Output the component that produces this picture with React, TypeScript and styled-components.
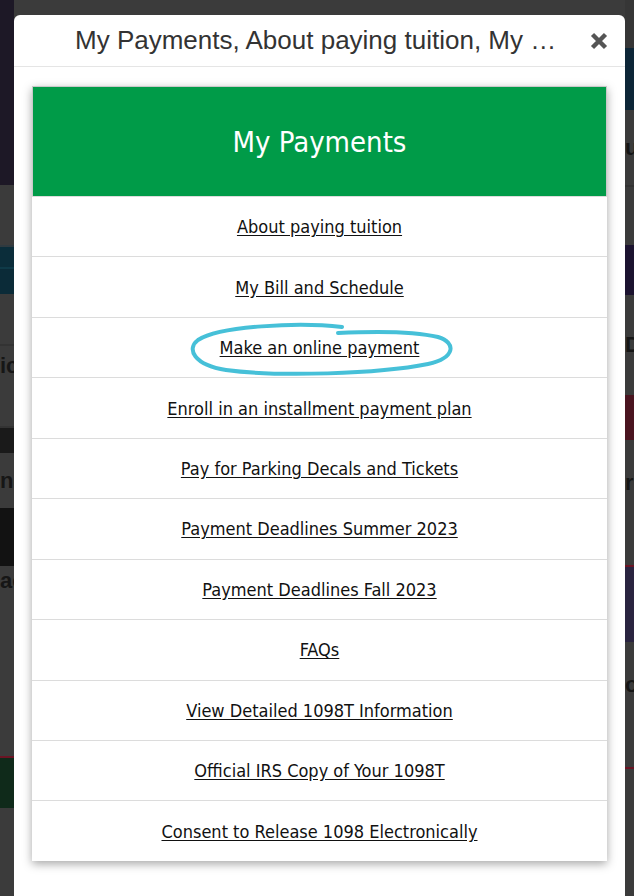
import React from "react";
import styled, { createGlobalStyle } from "styled-components";

const Global = createGlobalStyle`
  html, body { margin: 0; padding: 0; }
  body { background: #3b3b3b; font-family: "Liberation Sans", Arial, sans-serif; }
`;

const Page = styled.div`
  position: relative;
  width: 634px;
  height: 896px;
  overflow: hidden;
  background: #3b3b3b;
  display: flex;
  justify-content: space-between;
`;

const Strip = styled.div<{ $w: number }>`
  width: ${(p) => p.$w}px;
  display: flex;
  flex-direction: column;
`;

const Block = styled.div<{ $h: number; $bg: string; $line?: string }>`
  height: ${(p) => p.$h}px;
  background: ${(p) => p.$bg};
  border-bottom: ${(p) => (p.$line ? `2px solid ${p.$line}` : "none")};
  flex-shrink: 0;
  overflow: hidden;
  font: 700 22px "Liberation Sans", Arial, sans-serif;
  color: #161616;
  display: flex;
  align-items: center;
  white-space: nowrap;
`;

const Modal = styled.div`
  position: absolute;
  top: 15px;
  left: 14px;
  width: 611px;
  height: 920px;
  background: #fff;
  border-radius: 6px;
  display: flex;
  flex-direction: column;
`;

const Header = styled.div`
  height: 52px;
  border-bottom: 1px solid #e5e5e5;
  display: flex;
  align-items: center;
  padding: 0 17px 0 61px;
  gap: 22px;
  box-sizing: border-box;
  flex-shrink: 0;
`;

const Title = styled.h4`
  margin: 0;
  flex: 1;
  min-width: 0;
  font: 400 26px "Liberation Sans", Arial, sans-serif;
  color: #333;
  white-space: nowrap;
  overflow: hidden;
  text-overflow: ellipsis;
`;

const CloseBtn = styled.button`
  border: 0;
  background: none;
  padding: 0;
  width: 18px;
  height: 18px;
  display: flex;
  cursor: pointer;
`;

const Body = styled.div`
  padding: 19px 18px 0 18px;
`;

const Card = styled.div`
  background: #fff;
  box-shadow: 0 3px 9px rgba(0, 0, 0, 0.35);
`;

const Banner = styled.div`
  height: 110px;
  background: #009b48;
  border: 1px solid #c9c9c9;
  border-bottom: 0;
  box-sizing: border-box;
  display: flex;
  align-items: center;
  justify-content: center;
  color: #fff;
  font: 400 29px "DejaVu Sans Condensed", "DejaVu Sans", sans-serif;
  font-stretch: condensed;
`;

const Row = styled.div`
  position: relative;
  height: 60.45px;
  box-sizing: border-box;
  border-top: 1px solid #dcdcdc;
  display: flex;
  align-items: center;
  justify-content: center;
`;

const ItemLink = styled.a`
  font: 400 18px "DejaVu Sans Condensed", "DejaVu Sans", sans-serif;
  font-stretch: condensed;
  color: #111;
  text-decoration: underline;
  text-underline-offset: 2px;
  position: relative;
  z-index: 1;
`;

const Oval = styled.svg`
  position: absolute;
  left: calc(50% - 134px);
  top: 1px;
  pointer-events: none;
`;

const items = [
  "About paying tuition",
  "My Bill and Schedule",
  "Make an online payment",
  "Enroll in an installment payment plan",
  "Pay for Parking Decals and Tickets",
  "Payment Deadlines Summer 2023",
  "Payment Deadlines Fall 2023",
  "FAQs",
  "View Detailed 1098T Information",
  "Official IRS Copy of Your 1098T",
  "Consent to Release 1098 Electronically",
];

const leftBlocks = [
  { h: 185, bg: "#1d1826" },
  { h: 60, bg: "#3b3b3b", line: "#2f3a40" },
  { h: 20, bg: "#0b2d3a", line: "#0f3a48" },
  { h: 25, bg: "#0b2b38" },
  { h: 50, bg: "#3b3b3b", line: "#333" },
  { h: 40, bg: "#3b3b3b", text: "ic" },
  { h: 40, bg: "#3b3b3b", line: "#333" },
  { h: 25, bg: "#1a1a1a" },
  { h: 55, bg: "#3b3b3b", text: "nc" },
  { h: 58, bg: "#121212" },
  { h: 30, bg: "#3b3b3b", text: "ac" },
  { h: 160, bg: "#3b3b3b", line: "#6b1424" },
  { h: 50, bg: "#0f2a1a" },
  { h: 40, bg: "#3b3b3b" },
];

const rightBlocks = [
  { h: 48, bg: "#363636" },
  { h: 62, bg: "#0d2637" },
  { h: 75, bg: "#3b3b3b", line: "#333", text: "u" },
  { h: 58, bg: "#3b3b3b" },
  { h: 50, bg: "#1c1330" },
  { h: 100, bg: "#3b3b3b", text: "D" },
  { h: 45, bg: "#4a1420" },
  { h: 85, bg: "#3b3b3b", text: "r" },
  { h: 40, bg: "#3b3b3b", line: "#6b1424" },
  { h: 75, bg: "#2a2440" },
  { h: 85, bg: "#3b3b3b", text: "o" },
  { h: 40, bg: "#3b3b3b", line: "#6b1424" },
  { h: 100, bg: "#3b3b3b" },
];

const fullTitle = ["My Payments", ...items].join(", ").replace("My Bill", "My\u00A0Bill");

export default function App() {
  return (
    <>
      <Global />
      <Page>
        <Strip $w={14}>
          {leftBlocks.map((b, i) => (
            <Block key={i} $h={b.h} $bg={b.bg} $line={b.line}>
              {b.text}
            </Block>
          ))}
        </Strip>
        <Strip $w={9}>
          {rightBlocks.map((b, i) => (
            <Block key={i} $h={b.h} $bg={b.bg} $line={b.line}>
              {b.text}
            </Block>
          ))}
        </Strip>
        <Modal role="dialog">
          <Header>
            <Title>{fullTitle}</Title>
            <CloseBtn aria-label="Close">
              <svg width="18" height="18" viewBox="0 0 18 18">
                <path d="M2.5 2.5 L15.5 15.5 M15.5 2.5 L2.5 15.5" stroke="#555" strokeWidth="4.4" strokeLinecap="butt" />
              </svg>
            </CloseBtn>
          </Header>
          <Body>
            <Card>
              <Banner>My Payments</Banner>
              {items.map((t) => (
                <Row key={t}>
                  <ItemLink href="#">{t}</ItemLink>
                  {t === "Make an online payment" && (
                    <Oval width="272" height="60" viewBox="0 0 272 60">
                      <path
                        d="M156 8 C112 3, 34 7, 12 21 C0 30, 8 46, 40 51 C92 58, 192 55, 242 45 C269 39, 271 24, 252 18 C227 12, 192 12, 152 14"
                        fill="none"
                        stroke="#3cbdd6"
                        strokeWidth="4"
                        strokeLinecap="round"
                        opacity="0.95"
                      />
                    </Oval>
                  )}
                </Row>
              ))}
            </Card>
          </Body>
        </Modal>
      </Page>
    </>
  );
}
